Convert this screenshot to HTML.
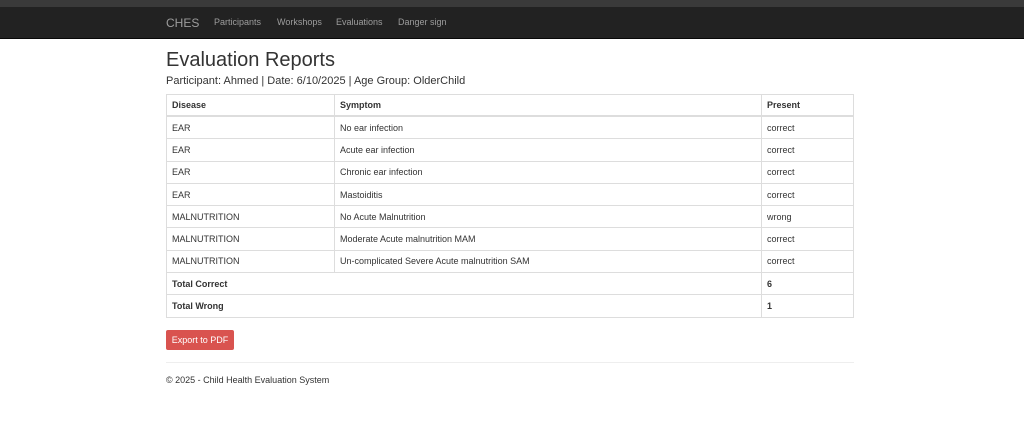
<!DOCTYPE html>
<html><head><style>
body{margin:0;background:#fff;font-family:"Liberation Sans",sans-serif;color:#333;width:1024px;height:444px;overflow:hidden;position:relative}
.top{position:absolute;left:0;top:0;width:1024px;height:7px;background:#3a3a3a}
.nav{position:absolute;left:0;top:7px;width:1024px;height:31px;background:#222;border-bottom:1px solid #080808}
.nav span{position:absolute;top:10px;font-size:9px;color:#9d9d9d}
.nav .brand{font-size:12px;top:9px}
h1{position:absolute;left:166px;top:49px;margin:0;font-size:20px;font-weight:normal;color:#333}
.sub{position:absolute;left:166px;top:75px;font-size:11px}
table{position:absolute;left:166px;top:94px;width:688px;border-collapse:collapse;font-size:9px}
td,th{border:1px solid #ddd;height:21.3px;padding:0 5px;text-align:left}
th{border-bottom:2px solid #ddd;height:20px}
.btn{position:absolute;left:166px;top:330px;width:68px;height:20px;background:#d9534f;color:#fff;font-size:9px;line-height:20px;text-align:center;border-radius:2px}
hr{position:absolute;left:166px;top:362px;width:688px;margin:0;border:0;border-top:1px solid #eee}
.foot{position:absolute;left:166px;top:375px;font-size:9px}
</style></head><body>
<div class="top"></div>
<div class="nav"><span class="brand" style="left:166px">CHES</span><span style="left:214px">Participants</span><span style="left:277px">Workshops</span><span style="left:336px">Evaluations</span><span style="left:398px">Danger sign</span></div>
<h1>Evaluation Reports</h1>
<div class="sub">Participant: Ahmed | Date: 6/10/2025 | Age Group: OlderChild</div>
<table>
<tr><th style="width:157px">Disease</th><th style="width:416px">Symptom</th><th>Present</th></tr>
<tr><td>EAR</td><td>No ear infection</td><td>correct</td></tr>
<tr><td>EAR</td><td>Acute ear infection</td><td>correct</td></tr>
<tr><td>EAR</td><td>Chronic ear infection</td><td>correct</td></tr>
<tr><td>EAR</td><td>Mastoiditis</td><td>correct</td></tr>
<tr><td>MALNUTRITION</td><td>No Acute Malnutrition</td><td>wrong</td></tr>
<tr><td>MALNUTRITION</td><td>Moderate Acute malnutrition MAM</td><td>correct</td></tr>
<tr><td>MALNUTRITION</td><td>Un-complicated Severe Acute malnutrition SAM</td><td>correct</td></tr>
<tr><td colspan="2"><b>Total Correct</b></td><td><b>6</b></td></tr>
<tr><td colspan="2"><b>Total Wrong</b></td><td><b>1</b></td></tr>
</table>
<div class="btn">Export to PDF</div>
<hr>
<div class="foot">© 2025 - Child Health Evaluation System</div>
</body></html>
